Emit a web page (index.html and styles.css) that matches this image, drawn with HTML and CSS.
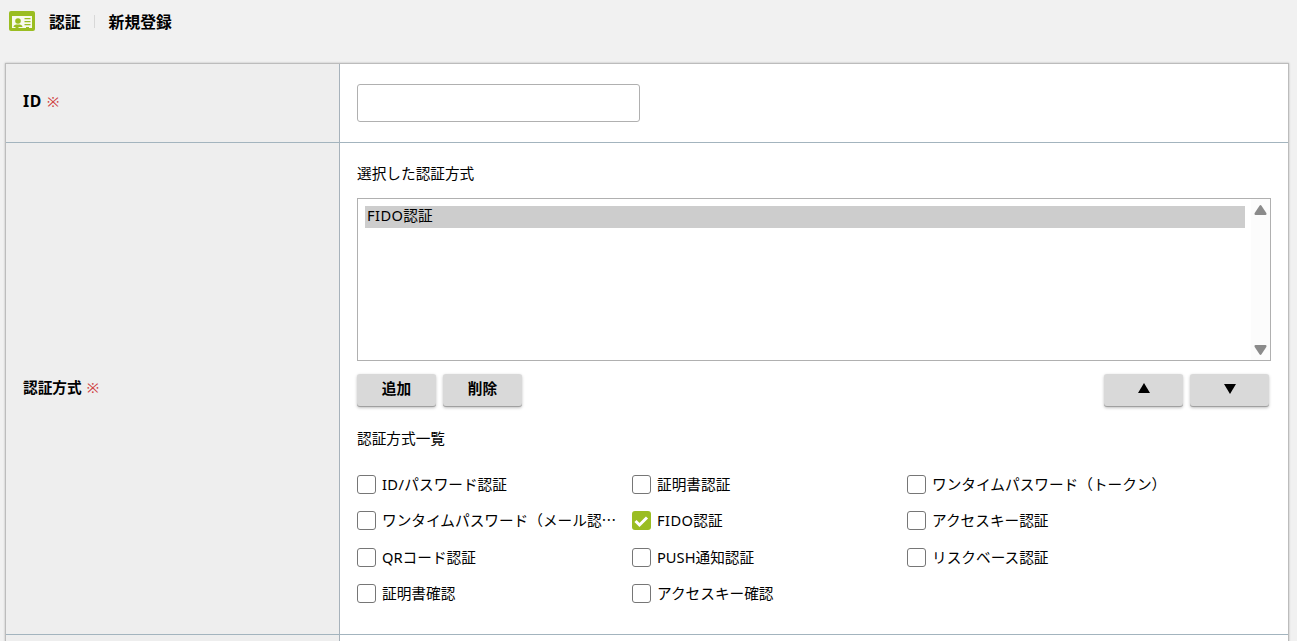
FILE: index.html
```html
<!DOCTYPE html>
<html lang="ja">
<head>
<meta charset="utf-8">
<title>認証 新規登録</title>
<link rel="stylesheet" href="styles.css">
</head>
<body>
<header class="page-header">
  <svg class="header-icon" width="26" height="20" viewBox="0 0 26 20">
    <rect width="26" height="20" rx="2" fill="#9abd22"/>
    <path d="M3 5h20v12h-3v-1h-3v1H9.500v-1h-3v1H3z" fill="#f8faee"/>
    <circle cx="9" cy="10" r="2.800" fill="#9abd22"/>
    <path d="M4.500 16c0-2.200 2-2.500 4.500-2.500s4.500 .5 4.500 2.500zM15.500 7H21.500v1.300H15.500zM15.500 10H21.500v1.300H15.500zM15.500 13H21.500v1.300H15.500z" fill="#9abd22"/>
  </svg>
  <span class="crumb">認証</span>
  <span class="crumb-divider"></span>
  <span class="crumb">新規登録</span>
</header>
<main class="form-table">
  <div class="row row-id">
    <div class="label"><span class="latin">ID</span> <span class="required">※</span></div>
    <div class="field"><input class="text-input" type="text"></div>
  </div>
  <div class="row row-method">
    <div class="label">認証方式 <span class="required">※</span></div>
    <div class="field">
      <p class="caption">選択した認証方式</p>
      <div class="listbox">
        <div class="options"><div class="option"><span class="fido">FIDO</span>認証</div></div>
        <div class="scrollbar">
          <svg width="13" height="10" viewBox="0 0 13 10"><path d="M5.500 .7Q6.500-.5 7.500 .7L12.300 8Q13 10 11.500 10H1.500Q0 10 .7 8z" fill="#8b8b8b"/></svg>
          <svg width="13" height="10" viewBox="0 0 13 10"><path d="M5.500 9.300Q6.500 10.500 7.500 9.300L12.300 2Q13 0 11.500 0H1.500Q0 0 .7 2z" fill="#8b8b8b"/></svg>
        </div>
      </div>
      <div class="buttons">
        <button class="btn">追加</button>
        <button class="btn">削除</button>
        <button class="btn btn-up" aria-label="上へ"><svg width="12" height="10" viewBox="0 0 12 10"><path d="M6 0l6 10H0z"/></svg></button>
        <button class="btn btn-down" aria-label="下へ"><svg width="12" height="10" viewBox="0 0 12 10"><path d="M6 10L0 0h12z"/></svg></button>
      </div>
      <p class="caption caption-list">認証方式一覧</p>
      <div class="checks">
        <label class="check"><span class="box"></span><span class="check-text"><span class="fido">ID/</span>パスワード認証</span></label>
        <label class="check"><span class="box"></span><span class="check-text">証明書認証</span></label>
        <label class="check"><span class="box"></span><span class="check-text">ワンタイムパスワード（トークン）</span></label>
        <label class="check"><span class="box"></span><span class="check-text">ワンタイムパスワード（メール認⋯</span></label>
        <label class="check"><span class="box box-checked"><svg width="19" height="19" viewBox="0 0 19 19"><path d="M3.500 10l4 4 7.500-7.500" fill="none" stroke="#fff" stroke-width="3"/></svg></span><span class="check-text"><span class="fido">FIDO</span>認証</span></label>
        <label class="check"><span class="box"></span><span class="check-text">アクセスキー認証</span></label>
        <label class="check"><span class="box"></span><span class="check-text">QRコード認証</span></label>
        <label class="check"><span class="box"></span><span class="check-text">PUSH通知認証</span></label>
        <label class="check"><span class="box"></span><span class="check-text">リスクベース認証</span></label>
        <label class="check"><span class="box"></span><span class="check-text">証明書確認</span></label>
        <label class="check"><span class="box"></span><span class="check-text">アクセスキー確認</span></label>
      </div>
    </div>
  </div>
  <div class="row row-next">
    <div class="label"></div>
    <div class="field"></div>
  </div>
</main>
</body>
</html>
```
FILE: styles.css
```css
* { box-sizing: border-box; }
body {
  margin: 0;
  height: 641px;
  overflow: hidden;
  background: #f1f1f1;
  color: #000;
  font-family: "Noto Sans", "Noto Sans CJK JP", sans-serif;
  font-size: 14.67px;
  line-height: 22px;
}
.page-header {
  display: flex;
  align-items: center;
  height: 63px;
  padding: 0 9px 21px;
  font-size: 15.8px;
  font-weight: bold;
}
.header-icon { margin-right: 14px; }
.crumb { padding-top: 2px; }
.crumb-divider {
  width: 1px;
  height: 13px;
  margin: 0 14px 0 13px;
  background: #d8d8d8;
}
.form-table {
  margin: 0 8px 0 5px;
  border: 1px solid #bcbcbc;
  border-bottom: 0;
  box-shadow: 0 0 2px rgba(0, 0, 0, .25);
  background: #fff;
}
.row {
  display: grid;
  grid-template-columns: 334px 1fr;
  border-bottom: 1px solid #a3b4be;
}
.row-id { height: 79px; }
.row-method { height: 492px; }
.row-next { height: 20px; }
.label {
  display: flex;
  align-items: center;
  gap: 4px;
  padding-left: 17px;
  padding-bottom: 4px;
  background: #eee;
  border-right: 1px solid #a7b2bb;
  font-weight: bold;
}
.row-method .label { gap: 5px; }
.latin {
  padding-right: 1px;
  font-size: 15.8px;
  letter-spacing: .6px;
}
.fido { letter-spacing: .4px; }
.required {
  color: #cf3b3b;
  font-weight: normal;
}
.field {
  min-width: 0;
  padding: 20px 17px 0;
}
.row-method .field { padding-top: 19px; }
.text-input {
  display: block;
  width: 283px;
  height: 38px;
  padding: 0 8px;
  border: 1px solid #b0b0b0;
  border-radius: 3px;
  background: #fff;
}
.caption { margin: 0; }
.listbox {
  display: flex;
  height: 163px;
  margin-top: 14px;
  border: 1px solid #b0b0b0;
}
.options {
  flex: 1;
  padding: 7px 6px 0 7px;
}
.option {
  height: 22px;
  padding-left: 2px;
  line-height: 18px;
  background: #cdcdcd;
}
.scrollbar {
  display: flex;
  flex-direction: column;
  justify-content: space-between;
  align-items: center;
  width: 19px;
  padding: 6px 1px 5px 0;
  background: #fcfcfc;
}
.buttons {
  display: flex;
  gap: 7px;
  margin-top: 13px;
  padding-right: 2px;
}
.btn {
  display: flex;
  align-items: center;
  justify-content: center;
  width: 79px;
  height: 33px;
  padding: 0 0 5px;
  border: 0;
  border-radius: 3px;
  background: #d9d9d9;
  box-shadow: 0 1px 3px rgba(0, 0, 0, .25), inset 0 -1px 0 #a0a0a0;
  color: #000;
  font: inherit;
  font-weight: bold;
}
.btn-up { margin-left: auto; }
.btn-down { padding-bottom: 3px; }
.caption-list { margin-top: 20px; }
.checks {
  display: grid;
  grid-template-columns: repeat(3, 275px);
  grid-template-rows: 36.4px 36.4px 37px 35.800px;
  margin-top: 17px;
}
.check {
  display: flex;
  align-items: center;
  gap: 6px;
  white-space: nowrap;
}
.box {
  flex: none;
  width: 19px;
  height: 19px;
  border: 1px solid #767676;
  border-radius: 3px;
  background: #fff;
}
.box-checked {
  border: 0;
  background: #9abd22;
}
.box svg { display: block; }
.check-text { margin-top: -1px; }
```
